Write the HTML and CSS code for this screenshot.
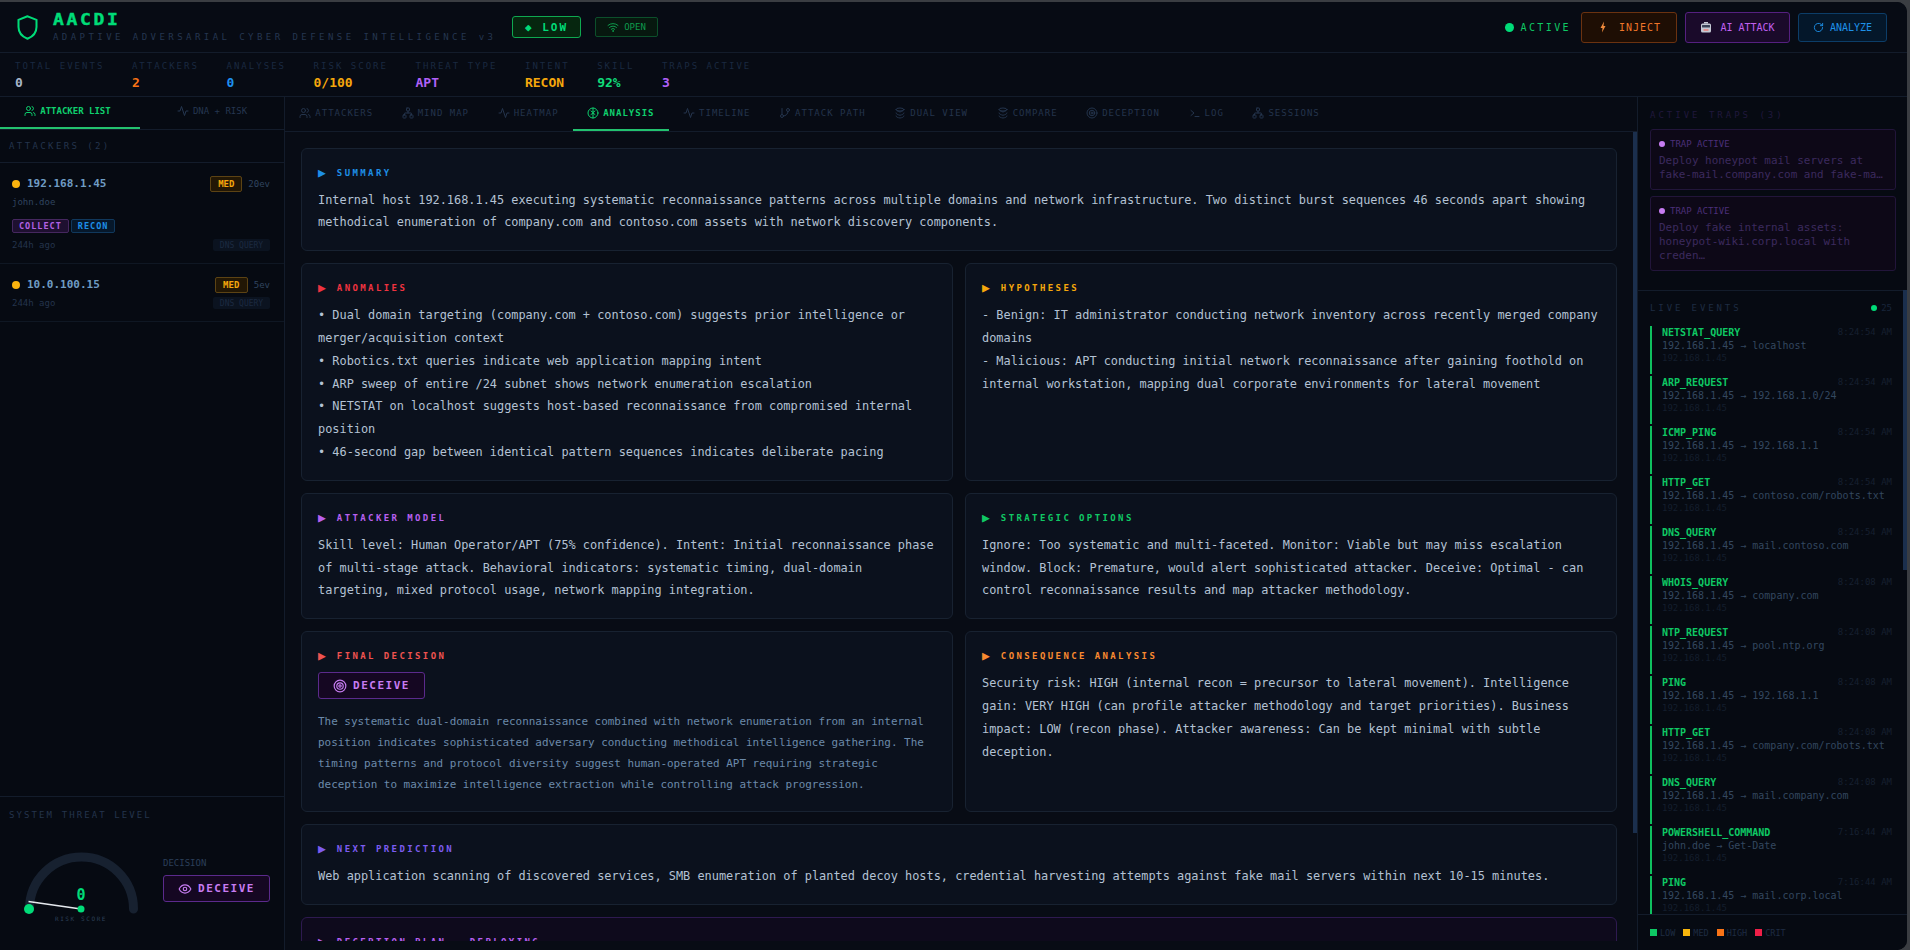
FILE: index.html
```html
<!DOCTYPE html>
<html lang="en">
<head>
<meta charset="utf-8">
<title>AACDI</title>
<link rel="stylesheet" href="styles.css">
</head>
<body>
<svg class="defs" aria-hidden="true">
  <symbol id="i-users" viewBox="0 0 24 24"><path d="M16 21v-2a4 4 0 0 0-4-4H6a4 4 0 0 0-4 4v2"/><circle cx="9" cy="7" r="4"/><path d="M22 21v-2a4 4 0 0 0-3-3.87"/><path d="M16 3.13a4 4 0 0 1 0 7.75"/></symbol>
  <symbol id="i-pulse" viewBox="0 0 24 24"><path d="M22 12h-4l-3 9L9 3l-3 9H2"/></symbol>
  <symbol id="i-net" viewBox="0 0 24 24"><rect x="16" y="16" width="6" height="6" rx="1"/><rect x="2" y="16" width="6" height="6" rx="1"/><rect x="9" y="2" width="6" height="6" rx="1"/><path d="M5 16v-3a1 1 0 0 1 1-1h12a1 1 0 0 1 1 1v3"/><path d="M12 12V8"/></symbol>
  <symbol id="i-brain" viewBox="0 0 24 24"><circle cx="12" cy="12" r="10"/><path d="M12 2v20"/><path d="M8 8l4 3 4-3"/><path d="M8 15l4-3 4 3"/></symbol>
  <symbol id="i-path" viewBox="0 0 24 24"><line x1="6" y1="3" x2="6" y2="15"/><circle cx="18" cy="6" r="3"/><circle cx="6" cy="18" r="3"/><path d="M18 9a9 9 0 0 1-9 9"/></symbol>
  <symbol id="i-db" viewBox="0 0 24 24"><ellipse cx="12" cy="5" rx="8" ry="3"/><path d="M4 5c0 2 3.600 3.500 8 5 4.400-1.500 8-3 8-5"/><path d="M4 12c0 2 3.600 3.500 8 4.500 4.400-1 8-2.500 8-4.500"/><path d="M4 18c0 2 3.600 3.500 8 4 4.400-.5 8-2 8-4"/></symbol>
  <symbol id="i-eye" viewBox="0 0 24 24"><path d="M2 12s3.600-7 10-7 10 7 10 7-3.600 7-10 7-10-7-10-7z"/><circle cx="12" cy="12" r="3"/></symbol>
  <symbol id="i-target" viewBox="0 0 24 24"><circle cx="12" cy="12" r="10"/><circle cx="12" cy="12" r="5.500"/><circle cx="12" cy="12" r="2"/></symbol>
  <symbol id="i-term" viewBox="0 0 24 24"><path d="m4 17 6-5-6-5"/><path d="M12 19h8"/></symbol>
</svg>

<div class="app">
  <header class="topbar">
    <div class="brand">
      <svg class="shield" viewBox="0 0 24 24"><path d="M12 2 4 5.200v6.300c0 5 3.300 8.600 8 10.500 4.700-1.900 8-5.500 8-10.500V5.200z"/></svg>
      <div class="brand-text">
        <div class="logo">AACDI</div>
        <div class="tagline">ADAPTIVE ADVERSARIAL CYBER DEFENSE INTELLIGENCE v3</div>
      </div>
    </div>
    <div class="level">◆ LOW</div>
    <div class="open">
      <svg class="ico" viewBox="0 0 24 24"><path d="M2 8.800a15 15 0 0 1 20 0"/><path d="M5 12.900a10 10 0 0 1 14 0"/><path d="M8.500 16.400a5 5 0 0 1 7 0"/><circle cx="12" cy="20" r="1"/></svg>
      OPEN
    </div>
    <div class="top-actions">
      <div class="live"><span class="live-dot"></span>ACTIVE</div>
      <div class="btn btn-inject">
        <svg class="btn-ico" viewBox="0 0 24 24"><path class="bolt" d="M14 1 7 14h4l-1 9 7-13h-4z"/></svg>
        INJECT
      </div>
      <div class="btn btn-ai">
        <svg class="btn-ico" viewBox="0 0 24 24"><rect class="rb-a" x="2" y="5" width="20" height="18" rx="3"/><rect class="rb-b" x="4" y="8" width="16" height="5" rx="1"/><rect class="rb-c" x="7" y="16" width="10" height="4"/><rect class="rb-a" x="8" y="2" width="8" height="3"/></svg>
        AI ATTACK
      </div>
      <div class="btn btn-analyze">
        <svg class="ico ico-an" viewBox="0 0 24 24"><path d="M21 12a9 9 0 1 1-3-6.700L21 8"/><path d="M21 3v5h-5"/></svg>
        ANALYZE
      </div>
    </div>
  </header>

  <section class="stats">
    <div class="stat"><span class="stat-label">TOTAL EVENTS</span><span class="stat-val c-grey">0</span></div>
    <div class="stat"><span class="stat-label">ATTACKERS</span><span class="stat-val c-orange">2</span></div>
    <div class="stat"><span class="stat-label">ANALYSES</span><span class="stat-val c-blue">0</span></div>
    <div class="stat"><span class="stat-label">RISK SCORE</span><span class="stat-val c-amber">0/100</span></div>
    <div class="stat"><span class="stat-label">THREAT TYPE</span><span class="stat-val c-purple">APT</span></div>
    <div class="stat"><span class="stat-label">INTENT</span><span class="stat-val c-amber">RECON</span></div>
    <div class="stat"><span class="stat-label">SKILL</span><span class="stat-val c-green">92%</span></div>
    <div class="stat"><span class="stat-label">TRAPS ACTIVE</span><span class="stat-val c-purple">3</span></div>
  </section>

  <div class="columns">
    <aside class="left">
      <div class="left-tabs">
        <div class="ltab ltab-on"><svg class="ico" viewBox="0 0 24 24"><use href="#i-users"/></svg>ATTACKER LIST</div>
        <div class="ltab"><svg class="ico" viewBox="0 0 24 24"><use href="#i-pulse"/></svg>DNA + RISK</div>
      </div>
      <div class="sec-head">ATTACKERS (2)</div>
      <div class="attacker">
        <div class="a-top">
          <span class="a-dot"></span><span class="a-ip">192.168.1.45</span>
          <span class="a-med">MED</span><span class="a-ev">20ev</span>
        </div>
        <div class="a-user">john.doe</div>
        <div class="a-tags"><span class="tag tag-p">COLLECT</span><span class="tag tag-b">RECON</span></div>
        <div class="a-bot"><span>244h ago</span><span class="a-kind">DNS QUERY</span></div>
      </div>
      <div class="attacker attacker-sm">
        <div class="a-top">
          <span class="a-dot"></span><span class="a-ip">10.0.100.15</span>
          <span class="a-med a-med-lg">MED</span><span class="a-ev">5ev</span>
        </div>
        <div class="a-bot"><span>244h ago</span><span class="a-kind">DNS QUERY</span></div>
      </div>
      <div class="threat">
        <div class="threat-title">SYSTEM THREAT LEVEL</div>
        <div class="threat-body">
          <svg class="gauge" viewBox="0 0 130 80">
            <path class="g-track" d="M16.500 60a52 52 0 0 1 104 0"/>
            <line class="g-needle" x1="68" y1="60" x2="15.500" y2="52.500"/>
            <circle class="g-dot" cx="16" cy="60" r="5"/>
            <circle class="g-dot" cx="68" cy="60" r="3.500"/>
            <text class="g-num" x="68" y="51" text-anchor="middle">0</text>
            <text class="g-cap" x="68" y="72" text-anchor="middle">RISK SCORE</text>
          </svg>
          <div class="decision">
            <div class="decision-label">DECISION</div>
            <div class="decision-btn"><svg class="ico ico-xl" viewBox="0 0 24 24"><use href="#i-eye"/></svg>DECEIVE</div>
          </div>
        </div>
      </div>
    </aside>

    <main class="center">
      <nav class="tabs">
        <div class="tab"><svg class="ico" viewBox="0 0 24 24"><use href="#i-users"/></svg>ATTACKERS</div>
        <div class="tab"><svg class="ico" viewBox="0 0 24 24"><use href="#i-net"/></svg>MIND MAP</div>
        <div class="tab"><svg class="ico" viewBox="0 0 24 24"><use href="#i-pulse"/></svg>HEATMAP</div>
        <div class="tab tab-on"><svg class="ico" viewBox="0 0 24 24"><use href="#i-brain"/></svg>ANALYSIS</div>
        <div class="tab"><svg class="ico" viewBox="0 0 24 24"><use href="#i-pulse"/></svg>TIMELINE</div>
        <div class="tab"><svg class="ico" viewBox="0 0 24 24"><use href="#i-path"/></svg>ATTACK PATH</div>
        <div class="tab"><svg class="ico" viewBox="0 0 24 24"><use href="#i-db"/></svg>DUAL VIEW</div>
        <div class="tab"><svg class="ico" viewBox="0 0 24 24"><use href="#i-db"/></svg>COMPARE</div>
        <div class="tab"><svg class="ico" viewBox="0 0 24 24"><use href="#i-target"/></svg>DECEPTION</div>
        <div class="tab"><svg class="ico" viewBox="0 0 24 24"><use href="#i-term"/></svg>LOG</div>
        <div class="tab"><svg class="ico" viewBox="0 0 24 24"><use href="#i-net"/></svg>SESSIONS</div>
      </nav>
      <div class="scroll">
        <div class="content">
          <article class="card">
            <h3 class="card-title t-blue"><span class="tri">▶</span>SUMMARY</h3>
            <p class="card-text">Internal host 192.168.1.45 executing systematic reconnaissance patterns across multiple domains and network infrastructure. Two distinct burst sequences 46 seconds apart showing methodical enumeration of company.com and contoso.com assets with network discovery components.</p>
          </article>
          <div class="pair">
            <article class="card">
              <h3 class="card-title t-red"><span class="tri">▶</span>ANOMALIES</h3>
              <p class="card-text">• Dual domain targeting (company.com + contoso.com) suggests prior intelligence or merger/acquisition context<br>• Robotics.txt queries indicate web application mapping intent<br>• ARP sweep of entire /24 subnet shows network enumeration escalation<br>• NETSTAT on localhost suggests host-based reconnaissance from compromised internal position<br>• 46-second gap between identical pattern sequences indicates deliberate pacing</p>
            </article>
            <article class="card">
              <h3 class="card-title t-amber"><span class="tri">▶</span>HYPOTHESES</h3>
              <p class="card-text">- Benign: IT administrator conducting network inventory across recently merged company domains<br>- Malicious: APT conducting initial network reconnaissance after gaining foothold on internal workstation, mapping dual corporate environments for lateral movement</p>
            </article>
          </div>
          <div class="pair">
            <article class="card">
              <h3 class="card-title t-purple"><span class="tri">▶</span>ATTACKER MODEL</h3>
              <p class="card-text">Skill level: Human Operator/APT (75% confidence). Intent: Initial reconnaissance phase of multi-stage attack. Behavioral indicators: systematic timing, dual-domain targeting, mixed protocol usage, network mapping integration.</p>
            </article>
            <article class="card">
              <h3 class="card-title t-green"><span class="tri">▶</span>STRATEGIC OPTIONS</h3>
              <p class="card-text">Ignore: Too systematic and multi-faceted. Monitor: Viable but may miss escalation window. Block: Premature, would alert sophisticated attacker. Deceive: Optimal - can control reconnaissance results and map attacker methodology.</p>
            </article>
          </div>
          <div class="pair">
            <article class="card">
              <h3 class="card-title t-rose"><span class="tri">▶</span>FINAL DECISION</h3>
              <div class="verdict"><svg class="ico ico-xl" viewBox="0 0 24 24"><use href="#i-target"/></svg>DECEIVE</div>
              <p class="card-dim">The systematic dual-domain reconnaissance combined with network enumeration from an internal position indicates sophisticated adversary conducting methodical intelligence gathering. The timing patterns and protocol diversity suggest human-operated APT requiring strategic deception to maximize intelligence extraction while controlling attack progression.</p>
            </article>
            <article class="card">
              <h3 class="card-title t-orange"><span class="tri">▶</span>CONSEQUENCE ANALYSIS</h3>
              <p class="card-text">Security risk: HIGH (internal recon = precursor to lateral movement). Intelligence gain: VERY HIGH (can profile attacker methodology and target priorities). Business impact: LOW (recon phase). Attacker awareness: Can be kept minimal with subtle deception.</p>
            </article>
          </div>
          <article class="card">
            <h3 class="card-title t-indigo"><span class="tri">▶</span>NEXT PREDICTION</h3>
            <p class="card-text">Web application scanning of discovered services, SMB enumeration of planted decoy hosts, credential harvesting attempts against fake mail servers within next 10-15 minutes.</p>
          </article>
          <article class="card card-plan">
            <h3 class="card-title t-purple"><span class="tri">▶</span>DECEPTION PLAN — DEPLOYING</h3>
          </article>
        </div>
      </div>
      <div class="vbar"></div>
    </main>

    <aside class="right">
      <div class="traps">
        <div class="traps-title">ACTIVE TRAPS (3)</div>
        <div class="trap">
          <div class="trap-head"><span class="trap-dot"></span>TRAP ACTIVE</div>
          <div class="trap-text">Deploy honeypot mail servers at fake-mail.company.com and fake-ma…</div>
        </div>
        <div class="trap">
          <div class="trap-head"><span class="trap-dot"></span>TRAP ACTIVE</div>
          <div class="trap-text">Deploy fake internal assets: honeypot-wiki.corp.local with creden…</div>
        </div>
      </div>
      <div class="events">
        <div class="events-head"><span>LIVE EVENTS</span><span class="events-count"><span class="ev-dot"></span>25</span></div>
        <div class="ev-list">
          <div class="ev"><div class="ev-top"><span class="ev-name">NETSTAT_QUERY</span><span class="ev-time">8:24:54 AM</span></div><div class="ev-flow">192.168.1.45 → localhost</div><div class="ev-src">192.168.1.45</div></div>
          <div class="ev"><div class="ev-top"><span class="ev-name">ARP_REQUEST</span><span class="ev-time">8:24:54 AM</span></div><div class="ev-flow">192.168.1.45 → 192.168.1.0/24</div><div class="ev-src">192.168.1.45</div></div>
          <div class="ev"><div class="ev-top"><span class="ev-name">ICMP_PING</span><span class="ev-time">8:24:54 AM</span></div><div class="ev-flow">192.168.1.45 → 192.168.1.1</div><div class="ev-src">192.168.1.45</div></div>
          <div class="ev"><div class="ev-top"><span class="ev-name">HTTP_GET</span><span class="ev-time">8:24:54 AM</span></div><div class="ev-flow">192.168.1.45 → contoso.com/robots.txt</div><div class="ev-src">192.168.1.45</div></div>
          <div class="ev"><div class="ev-top"><span class="ev-name">DNS_QUERY</span><span class="ev-time">8:24:54 AM</span></div><div class="ev-flow">192.168.1.45 → mail.contoso.com</div><div class="ev-src">192.168.1.45</div></div>
          <div class="ev"><div class="ev-top"><span class="ev-name">WHOIS_QUERY</span><span class="ev-time">8:24:08 AM</span></div><div class="ev-flow">192.168.1.45 → company.com</div><div class="ev-src">192.168.1.45</div></div>
          <div class="ev"><div class="ev-top"><span class="ev-name">NTP_REQUEST</span><span class="ev-time">8:24:08 AM</span></div><div class="ev-flow">192.168.1.45 → pool.ntp.org</div><div class="ev-src">192.168.1.45</div></div>
          <div class="ev"><div class="ev-top"><span class="ev-name">PING</span><span class="ev-time">8:24:08 AM</span></div><div class="ev-flow">192.168.1.45 → 192.168.1.1</div><div class="ev-src">192.168.1.45</div></div>
          <div class="ev"><div class="ev-top"><span class="ev-name">HTTP_GET</span><span class="ev-time">8:24:08 AM</span></div><div class="ev-flow">192.168.1.45 → company.com/robots.txt</div><div class="ev-src">192.168.1.45</div></div>
          <div class="ev"><div class="ev-top"><span class="ev-name">DNS_QUERY</span><span class="ev-time">8:24:08 AM</span></div><div class="ev-flow">192.168.1.45 → mail.company.com</div><div class="ev-src">192.168.1.45</div></div>
          <div class="ev"><div class="ev-top"><span class="ev-name">POWERSHELL_COMMAND</span><span class="ev-time">7:16:44 AM</span></div><div class="ev-flow">john.doe → Get-Date</div><div class="ev-src">192.168.1.45</div></div>
          <div class="ev"><div class="ev-top"><span class="ev-name">PING</span><span class="ev-time">7:16:44 AM</span></div><div class="ev-flow">192.168.1.45 → mail.corp.local</div><div class="ev-src">192.168.1.45</div></div>
        </div>
        <div class="legend">
          <span class="lg"><i class="sw sw-g"></i>LOW</span>
          <span class="lg"><i class="sw sw-y"></i>MED</span>
          <span class="lg"><i class="sw sw-o"></i>HIGH</span>
          <span class="lg"><i class="sw sw-r"></i>CRIT</span>
        </div>
      </div>
      <div class="rbar"></div>
    </aside>
  </div>
</div>
</body>
</html>
```

FILE: styles.css
```css
* { box-sizing: border-box; margin: 0; padding: 0; }
html, body { height: 100%; overflow: hidden; background: #3a3d42; }
body { font-family: "DejaVu Sans Mono", monospace; color: #c4d0e0; }
.defs { display: none; }
.ico { width: 12px; height: 12px; flex: none; fill: none; stroke: currentColor; stroke-width: 2; stroke-linecap: round; stroke-linejoin: round; }
.ico-an { width: 11px; height: 11px; }
.ico-xl { width: 14px; height: 14px; }

.app { width: 1907px; height: 948px; margin-top: 2px; background: #060a12; border-radius: 0 10px 10px 0; display: flex; flex-direction: column; overflow: hidden; }

.topbar { height: 51px; flex: none; display: flex; align-items: center; padding: 0 20px 0 13.500px; border-bottom: 1px solid #131c2b; background: #070b14; }
.brand { display: flex; align-items: center; gap: 12.500px; width: 498.500px; }
.shield { width: 27px; height: 27px; fill: none; stroke: #00dc78; stroke-width: 1.800; flex: none; }
.brand-text { display: flex; flex-direction: column; gap: 2px; }
.logo { font-size: 15px; line-height: 17px; font-weight: 700; letter-spacing: 2.200px; color: #00dc78; -webkit-text-stroke: .4px #00dc78; transform: scaleX(1.2); transform-origin: left center; }
.tagline { font-size: 9px; line-height: 12px; letter-spacing: 3.450px; color: #253650; white-space: nowrap; }
.level { width: 69px; height: 22px; display: flex; align-items: center; justify-content: center; font-size: 11px; font-weight: 700; letter-spacing: 2px; color: #00dc78; background: #06260f; border: 1px solid #0fa850; border-radius: 3px; }
.open { margin-left: 14px; width: 63px; height: 20px; display: flex; align-items: center; justify-content: center; gap: 5px; font-size: 9px; color: #0e9a4c; background: #07180f; border: 1px solid #0c4f2b; border-radius: 2px; }
.top-actions { margin-left: auto; display: flex; align-items: center; gap: 8px; }
.live { display: flex; align-items: center; gap: 6px; font-size: 10px; letter-spacing: 2.400px; color: #0ec864; margin-right: 2px; }
.live-dot { width: 9px; height: 9px; border-radius: 50%; background: #00dc78; }
.btn { height: 31px; display: flex; align-items: center; gap: 8px; font-size: 10px; border-radius: 3px; border: 1px solid; }
.btn-ico { width: 12px; height: 12px; flex: none; }
.bolt { fill: #f08a3c; }
.rb-a { fill: #c4c8d4; } .rb-b { fill: #3a4258; } .rb-c { fill: #e08f8f; }
.btn-inject { width: 96px; justify-content: center; gap: 10px; letter-spacing: 1px; color: #f0762a; background: #1e0e04; border-color: #6b3210; }
.btn-ai { width: 105px; justify-content: center; color: #c060f0; background: #1a0a2a; border-color: #552080; }
.btn-analyze { width: 89px; height: 29px; justify-content: center; gap: 6px; color: #1e90e8; background: #04172a; border-color: #0c3d68; }

.stats { height: 44px; flex: none; display: flex; gap: 27.500px; padding: 6px 15px 0; border-bottom: 1px solid #131c2b; background: #070b14; }
.stat { display: flex; flex-direction: column; gap: 2px; }
.stat-label { font-size: 9px; line-height: 14px; letter-spacing: 2.030px; color: #1a2940; white-space: nowrap; }
.stat-val { font-size: 13px; line-height: 16px; font-weight: 700; }
.c-grey { color: #a8b6c8; } .c-orange { color: #f97316; } .c-blue { color: #1e90f0; } .c-amber { color: #f5a70c; } .c-purple { color: #b060f8; } .c-green { color: #10dc7a; }

.columns { flex: 1; min-height: 0; display: flex; }
.left { width: 285px; flex: none; display: flex; flex-direction: column; border-right: 1px solid #131c2b; background: #060a12; }
.left-tabs { height: 33px; flex: none; display: flex; border-bottom: 1px solid #131c2b; }
.ltab { flex: 1; display: flex; align-items: center; justify-content: center; gap: 4px; font-size: 9px; color: #253650; padding-bottom: 4px; }
.ltab-on { flex: none; width: 140px; padding-right: 5px; color: #0fd06e; font-weight: 700; box-shadow: inset 0 -2px 0 #23c26f; }
.sec-head { height: 33px; flex: none; display: flex; align-items: center; padding: 0 0 1px 9px; font-size: 9px; letter-spacing: 2.400px; color: #24344c; border-bottom: 1px solid #131c2b; }
.attacker { padding: 12px 14px 0 12px; height: 101px; flex: none; border-bottom: 1px solid #0f1723; }
.attacker-sm { height: 58px; }
.a-top { display: flex; align-items: center; height: 17px; }
.a-dot { width: 8px; height: 8px; border-radius: 50%; background: #fbb30e; flex: none; margin-right: 7px; }
.a-ip { font-size: 11px; font-weight: 700; color: #6f9cc4; }
.a-med { margin-left: auto; width: 32px; height: 16px; display: flex; align-items: center; justify-content: center; font-size: 9px; font-weight: 700; color: #f5a70c; background: #221705; border: 1px solid #5c4314; border-radius: 2px; }
.a-med-lg { width: 33px; }
.a-ev { font-size: 9px; color: #30445f; margin-left: 6px; }
.a-user { font-size: 9px; color: #30445f; margin-top: 4px; line-height: 13px; }
.a-tags { display: flex; gap: 2px; margin-top: 10px; }
.tag { height: 14px; display: flex; align-items: center; padding: 0 6px; font-size: 8.500px; font-weight: 700; letter-spacing: 1px; border: 1px solid; border-radius: 2px; }
.tag-p { color: #b362e6; background: #1e1030; border-color: #45275f; }
.tag-b { color: #1e90e8; background: #06182b; border-color: #10385c; }
.a-bot { display: flex; justify-content: space-between; align-items: center; font-size: 9px; color: #24344c; margin-top: 6px; }
.attacker-sm .a-bot { margin-top: 4px; }
.a-kind { width: 57px; height: 12px; display: flex; align-items: center; justify-content: center; font-size: 8px; color: #1c2a40; background: #0b1320; border-radius: 2px; }

.threat { margin-top: auto; height: 154px; flex: none; border-top: 1px solid #131c2b; padding: 11px 9px 0; }
.threat-title { font-size: 9px; line-height: 14px; letter-spacing: 2.100px; color: #24344c; }
.threat-body { display: flex; margin-top: 27px; }
.gauge { width: 130px; height: 80px; flex: none; margin-left: 4px; }
.g-track { fill: none; stroke: #172130; stroke-width: 9; stroke-linecap: round; }
.g-needle { stroke: #e6e9ee; stroke-width: 1.500; }
.g-dot { fill: #00dc78; }
.g-num { font-family: "DejaVu Sans Mono", monospace; font-size: 15px; font-weight: 700; fill: #00dc78; }
.g-cap { font-family: "DejaVu Sans Mono", monospace; font-size: 6px; letter-spacing: 1.600px; fill: #2d4058; }
.decision { margin-left: 20px; padding-top: 7px; }
.decision-label { font-size: 9px; color: #2b3f59; margin-bottom: 5px; line-height: 14px; }
.decision-btn { width: 107px; height: 27px; display: flex; align-items: center; justify-content: center; gap: 6px; font-size: 11px; font-weight: 700; letter-spacing: 1.500px; color: #c77cf2; background: #150722; border: 1px solid #5b2a8c; border-radius: 3px; }

.center { flex: 1; min-width: 0; display: flex; flex-direction: column; position: relative; background: #080c15; }
.tabs { height: 35px; flex: none; display: flex; border-bottom: 1px solid #131c2b; background: #070b14; }
.tab { display: flex; align-items: center; gap: 4px; padding: 0 14.300px 3px; font-size: 9px; letter-spacing: 1px; color: #24344c; white-space: nowrap; }
.tab-on { color: #0fd06e; font-weight: 700; box-shadow: inset 0 -2px 0 #23c26f; }
.scroll { flex: 1; min-height: 0; overflow: hidden; margin-bottom: 9px; }
.content { display: flex; flex-direction: column; gap: 12px; padding: 16px 20px 0 16px; }
.pair { display: grid; grid-template-columns: 1fr 1fr; gap: 12px; }
.card { padding: 16px; background: #0b111d; border: 1px solid #182231; border-radius: 6px; }
.card-plan { background: #0e0a1c; border-color: #2e1a50; }
.card-title { font-size: 9px; font-weight: 700; letter-spacing: 2.400px; line-height: 16px; margin-bottom: 7.500px; display: flex; align-items: center; }
.tri { font-size: 13px; letter-spacing: 0; margin-right: 11px; }
.t-blue { color: #1e8ee6; } .t-red { color: #ef3340; } .t-amber { color: #f5a70c; } .t-purple { color: #b860f0; } .t-green { color: #10c864; } .t-rose { color: #ef5350; } .t-orange { color: #f98a30; } .t-indigo { color: #7c5cf0; }
.card-text { font-size: 11.900px; line-height: 22.900px; color: #b4c2d4; }
.card-dim { font-size: 10.950px; line-height: 21px; color: #6b8aaa; }
.verdict { display: flex; align-items: center; gap: 6px; height: 27px; width: 107px; justify-content: center; margin: 8px 0 12px; font-size: 11px; font-weight: 700; letter-spacing: 1.500px; color: #c77cf2; background: #150722; border: 1px solid #5b2a8c; border-radius: 3px; }
.vbar { position: absolute; right: 0; top: 35px; width: 4px; height: 701px; background: #1b2f4d; }

.right { width: 270px; flex: none; display: flex; flex-direction: column; background: #060a12; border-left: 1px solid #131c2b; position: relative; }
.traps { height: 194px; flex: none; padding: 11px 11px 0 12px; border-bottom: 1px solid #131c2b; overflow: hidden; }
.traps-title { font-size: 9px; letter-spacing: 3px; color: #20183c; margin-bottom: 7px; line-height: 14px; }
.trap { padding: 8px 8px 7px; margin-bottom: 6px; background: #0d0817; border: 1px solid #22153a; border-radius: 3px; }
.trap-head { display: flex; align-items: center; gap: 5px; font-size: 9px; color: #4b2f78; line-height: 12px; margin-bottom: 4px; }
.trap-dot { width: 6px; height: 6px; border-radius: 50%; background: #c77cf2; }
.trap-text { font-size: 10.950px; line-height: 14px; color: #3c2a5e; }
.events { flex: 1; min-height: 0; display: flex; flex-direction: column; padding-top: 10px; }
.events-head { display: flex; justify-content: space-between; align-items: center; font-size: 9px; letter-spacing: 2.900px; color: #1e2c42; padding: 0 15px 0 12px; margin-bottom: 11px; line-height: 14px; }
.events-count { display: flex; align-items: center; gap: 4px; letter-spacing: 0; color: #18253a; }
.ev-dot { width: 6px; height: 6px; border-radius: 50%; background: #00dc78; }
.ev-list { flex: 1; min-height: 0; overflow: hidden; padding: 0 15px 0 12px; display: flex; flex-direction: column; gap: 2px; }
.ev { height: 48px; flex: none; border-left: 2px solid #0fc05f; padding-left: 10px; }
.ev-top { display: flex; justify-content: space-between; line-height: 13px; }
.ev-name { font-size: 10px; font-weight: 700; color: #0ec864; }
.ev-time { font-size: 9px; color: #162030; }
.ev-flow { font-size: 10px; line-height: 13px; color: #33475f; white-space: nowrap; }
.ev-src { font-size: 9px; line-height: 13px; color: #141e2d; }
.legend { height: 36px; flex: none; display: flex; align-items: center; gap: 8px; padding-left: 12px; border-top: 1px solid #131c2b; }
.lg { display: flex; align-items: center; gap: 3px; font-size: 8.500px; color: #1e2c42; }
.sw { width: 7px; height: 7px; display: block; }
.sw-g { background: #0ec864; } .sw-y { background: #f8b50c; } .sw-o { background: #f97316; } .sw-r { background: #ef1f48; }
.rbar { position: absolute; right: 0; top: 193px; width: 4px; height: 280px; background: #1b2f4d; }
```
